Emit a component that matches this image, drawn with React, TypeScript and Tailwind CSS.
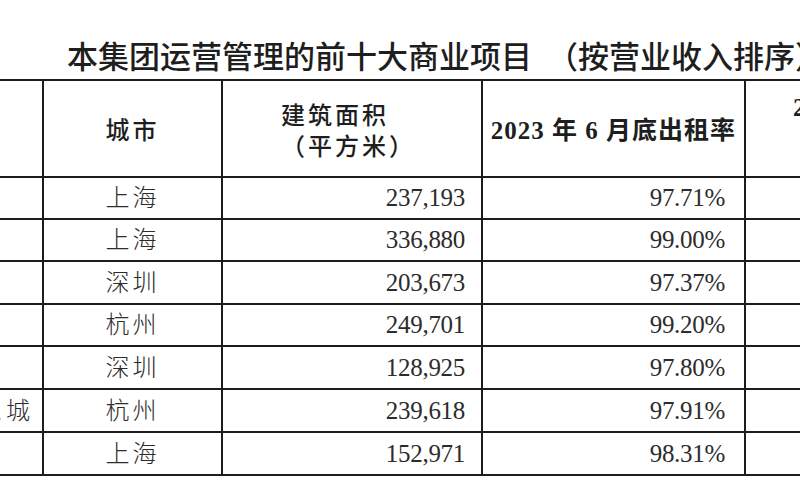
const rows = [
  { name: "", city: "上海", area: "237,193", rate: "97.71%", h: "h-[42px]" },
  { name: "", city: "上海", area: "336,880", rate: "99.00%", h: "h-[42px]" },
  { name: "", city: "深圳", area: "203,673", rate: "97.37%", h: "h-[43px]" },
  { name: "", city: "杭州", area: "249,701", rate: "99.20%", h: "h-[42px]" },
  { name: "", city: "深圳", area: "128,925", rate: "97.80%", h: "h-[43px]" },
  { name: "西溪印象城", city: "杭州", area: "239,618", rate: "97.91%", h: "h-[43px]" },
  { name: "", city: "上海", area: "152,971", rate: "98.31%", h: "h-[43px]" },
];

const cjk = "font-['Noto_Sans_CJK_SC',sans-serif]";
const serif = "font-['Liberation_Serif','Noto_Sans_CJK_SC',serif]";
const cell = "border-2 border-[#1c1c1c] p-0";

export default function App() {
  return (
    <div className="w-[800px] h-[500px] overflow-hidden bg-white">
      <h1
        className={`${cjk} pl-[67px] pt-[38px] h-[79px] text-[31px] leading-[33px] font-medium text-[#1e1e1e] whitespace-nowrap`}
      >
        本集团运营管理的前十大商业项目<span className="ml-[15px]">（</span>按营业收入排序）
      </h1>

      <table className="table-fixed border-collapse ml-[-159px] w-[1222px]">
        <colgroup>
          <col className="w-[201px]" />
          <col className="w-[179px]" />
          <col className="w-[260px]" />
          <col className="w-[263px]" />
          <col className="w-[319px]" />
        </colgroup>
        <thead>
          <tr className="h-[97px] text-[#1e1e1e]">
            <th className={`${cell}`}></th>
            <th className={`${cell} ${cjk} text-[24px] font-medium tracking-[3px]`}>
              城市
            </th>
            <th className={`${cell} ${cjk} text-[24px] leading-[31px] font-medium tracking-[3px] pl-[58px] text-left`}>
              建筑面积
              <br />
              （平方米）
            </th>
            <th className={`${cell} ${serif} text-[25px] font-bold tracking-[1px] pt-[4px] whitespace-nowrap`}>
              2023 年 6 月底出租率
            </th>
            <th className={`${cell} ${serif} text-[25px] font-bold text-left align-top pl-[47px] pt-[12px] leading-[30px] whitespace-nowrap`}>
              2022 年 12 月底出租率
            </th>
          </tr>
        </thead>
        <tbody>
          {rows.map((r, i) => (
            <tr key={i} className={`${r.h} text-[#2c2c2c]`}>
              <td className={`${cell} ${serif} text-[24px] font-light text-right pr-[8px] tracking-[4px] whitespace-nowrap`}>
                {r.name}
              </td>
              <td className={`${cell} ${serif} text-[24px] font-light text-center tracking-[3px]`}>
                {r.city}
              </td>
              <td className={`${cell} ${serif} text-[25px] text-right pr-[16px] tracking-[-0.3px]`}>
                {r.area}
              </td>
              <td className={`${cell} ${serif} text-[25px] text-right pr-[19px] tracking-[-0.3px]`}>
                {r.rate}
              </td>
              <td className={`${cell}`}></td>
            </tr>
          ))}
        </tbody>
      </table>
    </div>
  );
}
